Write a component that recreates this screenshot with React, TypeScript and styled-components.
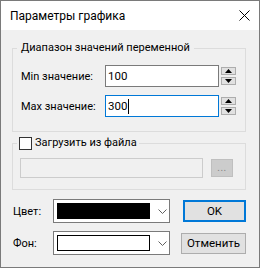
import React from "react";
import styled, { createGlobalStyle } from "styled-components";

const Global = createGlobalStyle`
  html, body { margin: 0; padding: 0; background: #ffffff; }
  body { font-family: Roboto, "Noto Sans", sans-serif; font-size: 11px; color: #000; }
  * { box-sizing: border-box; }
`;

const Window = styled.div`
  width: 260px;
  height: 268px;
  border: 1px solid #7a7a7a;
  display: flex;
  flex-direction: column;
  background: #f0f0f0;
`;

const TitleBar = styled.div`
  height: 29px;
  background: #ffffff;
  display: flex;
  align-items: center;
  justify-content: space-between;
  padding: 0 9px 0 9px;
  flex: none;
`;

const Title = styled.span`
  font-size: 12px;
  line-height: 16px;
  margin-top: 1px;
`;

const CloseBtn = styled.div`
  width: 12px;
  height: 12px;
  display: flex;
  align-items: center;
  justify-content: center;
`;

const Content = styled.div`
  flex: 1;
  display: flex;
  flex-direction: column;
  padding: 0 13px 0 11px;
`;

const Group = styled.div<{ $mt: number; $h: number }>`
  position: relative;
  margin-top: ${(p) => p.$mt}px;
  height: ${(p) => p.$h}px;
  border: 1px solid #dcdcdc;
  display: flex;
  flex-direction: column;
`;

const Caption = styled.div<{ $left: number; $pad: number }>`
  position: absolute;
  top: -8px;
  left: ${(p) => p.$left}px;
  padding: 0 ${(p) => p.$pad}px;
  background: #f0f0f0;
  display: flex;
  align-items: center;
  gap: 3px;
  line-height: 14px;
  height: 14px;
  white-space: nowrap;
`;

const Row = styled.div<{ $mt: number }>`
  display: flex;
  align-items: center;
  margin-top: ${(p) => p.$mt}px;
  height: 22px;
`;

const Label = styled.span<{ $w: number }>`
  width: ${(p) => p.$w}px;
  padding-left: 8px;
  flex: none;
  white-space: nowrap;
`;

const TextBox = styled.div<{ $focused?: boolean }>`
  width: 114px;
  height: 22px;
  background: #ffffff;
  border: 1px solid ${(p) => (p.$focused ? "#0078d7" : "#7a7a7a")};
  display: flex;
  align-items: center;
  padding-left: 2px;
  font-size: 11.5px;
`;

const Caret = styled.span`
  display: inline-block;
  width: 1px;
  height: 15px;
  background: #000;
  margin-left: 1px;
`;

const Spin = styled.div`
  display: flex;
  flex-direction: column;
  gap: 2px;
  margin-left: 2px;
`;

const SpinBtn = styled.div`
  width: 15px;
  height: 8px;
  background: #e1e1e1;
  border: 1px solid #adadad;
  display: flex;
  align-items: center;
  justify-content: center;
`;

const CheckBox = styled.div`
  width: 13px;
  height: 13px;
  border: 1px solid #333333;
  background: #ffffff;
`;

const FileRow = styled.div`
  display: flex;
  align-items: flex-start;
  margin-top: 14px;
  padding-left: 7px;
`;

const FileBox = styled.div`
  width: 183px;
  height: 20px;
  border: 1px solid #cccccc;
  background: #f0f0f0;
`;

const BrowseBtn = styled.div`
  width: 22px;
  height: 18px;
  margin-left: 8px;
  margin-top: 1px;
  background: #cccccc;
  border: 1px solid #bfbfbf;
  color: #838383;
  font-size: 10px;
  line-height: 12px;
  display: flex;
  align-items: center;
  justify-content: center;
  letter-spacing: 0.5px;
`;

const Bottom = styled.div`
  display: grid;
  grid-template-columns: 40px 117px 1fr;
  grid-auto-rows: 24px;
  row-gap: 8px;
  margin-top: 9px;
  padding-left: 1px;
  align-items: center;
`;

const BottomLabel = styled.span`
  white-space: nowrap;
`;

const Combo = styled.div`
  height: 24px;
  border: 1px solid #7a7a7a;
  background: #ffffff;
  display: flex;
  align-items: center;
  padding-left: 3px;
`;

const Swatch = styled.div<{ $color: string }>`
  width: 93px;
  height: 16px;
  background: ${(p) => p.$color};
  border: 1px solid #000;
`;

const Chevron = styled.svg`
  margin-left: 8px;
`;

const Button = styled.div<{ $default?: boolean; $w: number; $h: number }>`
  justify-self: end;
  width: ${(p) => p.$w}px;
  height: ${(p) => p.$h}px;
  background: #e1e1e1;
  border: ${(p) => (p.$default ? "2px solid #0078d7" : "1px solid #adadad")};
  display: flex;
  align-items: center;
  justify-content: center;
  white-space: nowrap;
  font-size: 11.5px;
`;

const Up = () => (
  <svg width="7" height="4" viewBox="0 0 7 4">
    <path d="M0 4 L3.5 0 L7 4 Z" fill="#000" />
  </svg>
);
const Down = () => (
  <svg width="7" height="4" viewBox="0 0 7 4">
    <path d="M0 0 L3.5 4 L7 0 Z" fill="#000" />
  </svg>
);

const ChevronIcon = () => (
  <Chevron width="9" height="5" viewBox="0 0 9 5">
    <path d="M0.5 0.5 L4.5 4.5 L8.5 0.5" fill="none" stroke="#606060" strokeWidth="1" />
  </Chevron>
);

export default function App() {
  return (
    <>
      <Global />
      <Window>
        <TitleBar>
          <Title>Параметры графика</Title>
          <CloseBtn>
            <svg width="11" height="11" viewBox="0 0 11 11">
              <path d="M0.5 0.5 L10.5 10.5 M10.5 0.5 L0.5 10.5" stroke="#000" strokeWidth="1" />
            </svg>
          </CloseBtn>
        </TitleBar>
        <Content>
          <Group $mt={18} $h={84}>
            <Caption $left={4} $pad={4}>Диапазон значений переменной</Caption>
            <Row $mt={16}>
              <Label $w={92}>Min значение:</Label>
              <TextBox>100</TextBox>
              <Spin>
                <SpinBtn><Up /></SpinBtn>
                <SpinBtn><Down /></SpinBtn>
              </Spin>
            </Row>
            <Row $mt={8}>
              <Label $w={92}>Max значение:</Label>
              <TextBox $focused>300<Caret /></TextBox>
              <Spin>
                <SpinBtn><Up /></SpinBtn>
                <SpinBtn><Down /></SpinBtn>
              </Spin>
            </Row>
          </Group>
          <Group $mt={11} $h={47}>
            <Caption $left={4} $pad={2}>
              <CheckBox />
              <span>Загрузить из файла</span>
            </Caption>
            <FileRow>
              <FileBox />
              <BrowseBtn>...</BrowseBtn>
            </FileRow>
          </Group>
          <Bottom>
            <BottomLabel>Цвет:</BottomLabel>
            <Combo>
              <Swatch $color="#000000" />
              <ChevronIcon />
            </Combo>
            <Button $default $w={63} $h={22}>OK</Button>
            <BottomLabel>Фон:</BottomLabel>
            <Combo>
              <Swatch $color="#ffffff" />
              <ChevronIcon />
            </Combo>
            <Button $w={65} $h={21}>Отменить</Button>
          </Bottom>
        </Content>
      </Window>
    </>
  );
}
